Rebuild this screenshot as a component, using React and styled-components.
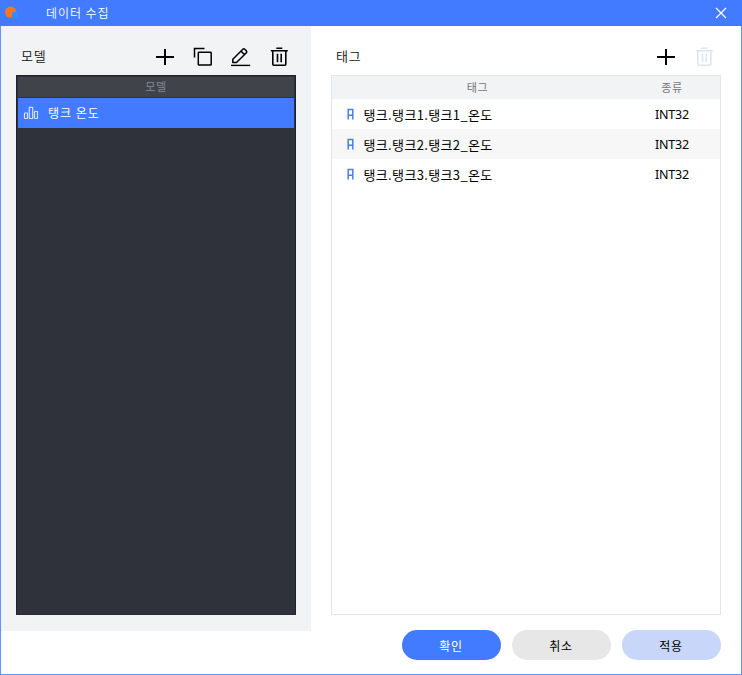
import React from "react";
import styled, { createGlobalStyle, css } from "styled-components";

const GlobalStyle = createGlobalStyle`
  * { box-sizing: border-box; }
  body { margin: 0; background: #fff; }
`;

const Dialog = styled.div`
  width: 742px;
  height: 675px;
  display: flex;
  flex-direction: column;
  background: #fff;
  color: #000;
  font: 12px/16px "Noto Sans CJK KR", sans-serif;
  white-space: nowrap;
`;

const TitleBar = styled.header`
  height: 26px;
  flex: none;
  display: flex;
  align-items: center;
  padding: 0 15px 0 5px;
  background: #427bff;
  color: #fff;
`;

const Title = styled.h1`
  margin: 0 auto 0 27px;
  font-size: 12px;
  font-weight: 350;
  letter-spacing: 0.95px;
`;

const Frame = styled.div`
  flex: 1;
  border: 1px solid #5f97f7;
  border-top: 0;
`;

const Body = styled.main`
  display: flex;
  height: 604px;
`;

const Pane = styled.section`
  display: flex;
  flex-direction: column;
  width: ${(p) => p.$width}px;
  height: 605px;
  padding: 13px ${(p) => (p.$tinted ? 15 : 20)}px 16px;
  background: ${(p) => (p.$tinted ? "#f1f3f5" : "#fff")};
`;

const Toolbar = styled.div`
  height: 36px;
  flex: none;
  display: flex;
  align-items: center;
  gap: 18px;
  padding: 0 7px 0 5px;
  svg { display: block; }
`;

const PaneTitle = styled.h2`
  margin: 0 auto 0 0;
  padding-bottom: 2px;
  font-size: 13px;
  font-weight: 350;
  letter-spacing: 0.9px;
  color: #111;
`;

const IconButton = styled.button`
  width: 20px;
  height: 20px;
  padding: 0;
  border: 0;
  background: none;
  color: #000;
  &:disabled { color: #dfe6ec; }
`;

const ModelList = styled.div`
  flex: 1;
  border: 1px solid #202329;
  border-bottom-color: #292c33;
  background: #2f323a;
  padding: 0 1px;
`;

const ModelHeader = styled.div`
  height: 22px;
  margin: 0 -1px;
  border: 1px solid #2f323a;
  background: #404349;
  color: #808997;
  font-size: 11px;
  line-height: 18px;
  letter-spacing: 0.6px;
  text-align: center;
`;

const ModelRow = styled.div`
  height: 30px;
  display: flex;
  align-items: center;
  gap: 9px;
  padding-left: 5px;
  background: #427bff;
  color: #fff;
  font-size: 12px;
  letter-spacing: 1px;
`;

const TagTable = styled.div`
  flex: 1;
  border: 1px solid #e3e5e7;
`;

const columns = css`
  display: grid;
  grid-template-columns: 291px 98px;
  align-items: center;
`;

const TagHeader = styled.div`
  ${columns}
  height: 23px;
  padding-bottom: 2px;
  background: #f1f3f5;
  color: #777;
  font-size: 11px;
  letter-spacing: 0.6px;
  text-align: center;
`;

const TagRow = styled.div`
  ${columns}
  height: 30px;
  padding-top: 2px;
  font-size: 13px;
  &:nth-child(odd) { background: #f7f7f7; }
`;

const TagName = styled.div`
  display: flex;
  align-items: center;
  gap: 10px;
  padding-left: 14.5px;
  letter-spacing: 0.35px;
  svg { margin-top: -2px; }
`;

const TagType = styled.div`
  text-align: center;
  font-family: "Noto Sans", sans-serif;
  font-size: 12.5px;
  letter-spacing: -0.15px;
`;

const Footer = styled.footer`
  display: flex;
  justify-content: flex-end;
  gap: 11px;
  padding-right: 20.5px;
`;

const tones = {
  primary: css`background: #427bff; color: #fff;`,
  neutral: css`background: #e7e7e7; color: #000;`,
  soft: css`background: #c8d6f9; color: #000;`,
};

const ActionButton = styled.button`
  width: 99px;
  height: 30px;
  padding: 0;
  border: 0;
  border-radius: 15px;
  font: 12px/29px "Noto Sans CJK KR", sans-serif;
  letter-spacing: 0.7px;
  ${(p) => tones[p.$tone]}
`;

const Icon = ({ children, ...rest }) => (
  <svg width="20" height="20" viewBox="0 0 20 20" fill="none" stroke="currentColor" strokeWidth="1.5" {...rest}>
    {children}
  </svg>
);

const PlusIcon = () => (
  <Icon strokeWidth="2"><path d="M1 10h18M10 2v16" /></Icon>
);

const CopyIcon = () => (
  <Icon>
    <path d="M1.5 10.5V1.5H11.5" />
    <rect x="5.3" y="5.2" width="12.9" height="12.9" rx="0.7" />
  </Icon>
);

const EditIcon = () => (
  <Icon>
    <path d="M0 18.4h19.2" strokeWidth="1.4" />
    <path d="M1.8 15.5V12.2L11.8 2.3Q12.8 1.3 13.8 2.3L15.4 3.9Q16.3 4.9 15.4 5.8L5.5 15.5ZM10 4.1L13.6 7.7" strokeLinejoin="round" />
  </Icon>
);

const TrashIcon = () => (
  <Icon>
    <path d="M1.8 3.8h17M7.3 1.3h6M3.8 4v13.2q0 1 1 1h11q1 0 1-1V4M8.5 6.8v8.4M12.2 6.8v8.4" strokeWidth="1.6" />
  </Icon>
);

const LogoIcon = () => (
  <svg width="14" height="14" viewBox="0 0 14 14">
    <circle cx="5.7" cy="6.2" r="5.6" fill="#ff741e" />
    <circle cx="10" cy="9" r="3.2" fill="#348cff" />
  </svg>
);

const CloseIcon = () => (
  <svg width="12" height="12" viewBox="0 0 12 12" stroke="#fff" strokeWidth="1.2">
    <path d="M1 1l10 10M11 1L1 11" />
  </svg>
);

const ChartIcon = () => (
  <svg width="16" height="14" viewBox="0 0 16 14" fill="none" stroke="#d3e0ff" strokeWidth="1.2">
    <rect x="1.5" y="7" width="3" height="5.5" rx="0.5" />
    <rect x="6.3" y="1.3" width="3.4" height="11.2" rx="0.5" />
    <rect x="11.5" y="5.5" width="3" height="7" rx="0.5" />
  </svg>
);

const AnalogIcon = () => (
  <svg width="7" height="12" viewBox="0 0 7 12" fill="none" stroke="#477df5" strokeWidth="1.5">
    <path d="M1.2 11.5V1.5H5.8v10M1.2 7.3h4.6" />
  </svg>
);

const tags = [1, 2, 3].map((n) => ({ name: `탱크.탱크${n}.탱크${n}_온도`, type: "INT32" }));

export default function App() {
  return (
    <>
      <GlobalStyle />
      <Dialog>
        <TitleBar>
          <LogoIcon />
          <Title>데이터 수집</Title>
          <CloseIcon />
        </TitleBar>
        <Frame>
          <Body>
            <Pane $width={310} $tinted>
              <Toolbar>
                <PaneTitle>모델</PaneTitle>
                <IconButton aria-label="추가"><PlusIcon /></IconButton>
                <IconButton aria-label="복사"><CopyIcon /></IconButton>
                <IconButton aria-label="편집"><EditIcon /></IconButton>
                <IconButton aria-label="삭제"><TrashIcon /></IconButton>
              </Toolbar>
              <ModelList>
                <ModelHeader>모델</ModelHeader>
                <ModelRow>
                  <ChartIcon />
                  탱크 온도
                </ModelRow>
              </ModelList>
            </Pane>
            <Pane $width={430}>
              <Toolbar>
                <PaneTitle>태그</PaneTitle>
                <IconButton aria-label="추가"><PlusIcon /></IconButton>
                <IconButton aria-label="삭제" disabled><TrashIcon /></IconButton>
              </Toolbar>
              <TagTable>
                <TagHeader>
                  <span>태그</span>
                  <span>종류</span>
                </TagHeader>
                {tags.map((tag) => (
                  <TagRow key={tag.name}>
                    <TagName><AnalogIcon />{tag.name}</TagName>
                    <TagType>{tag.type}</TagType>
                  </TagRow>
                ))}
              </TagTable>
            </Pane>
          </Body>
          <Footer>
            <ActionButton $tone="primary">확인</ActionButton>
            <ActionButton $tone="neutral">취소</ActionButton>
            <ActionButton $tone="soft">적용</ActionButton>
          </Footer>
        </Frame>
      </Dialog>
    </>
  );
}
